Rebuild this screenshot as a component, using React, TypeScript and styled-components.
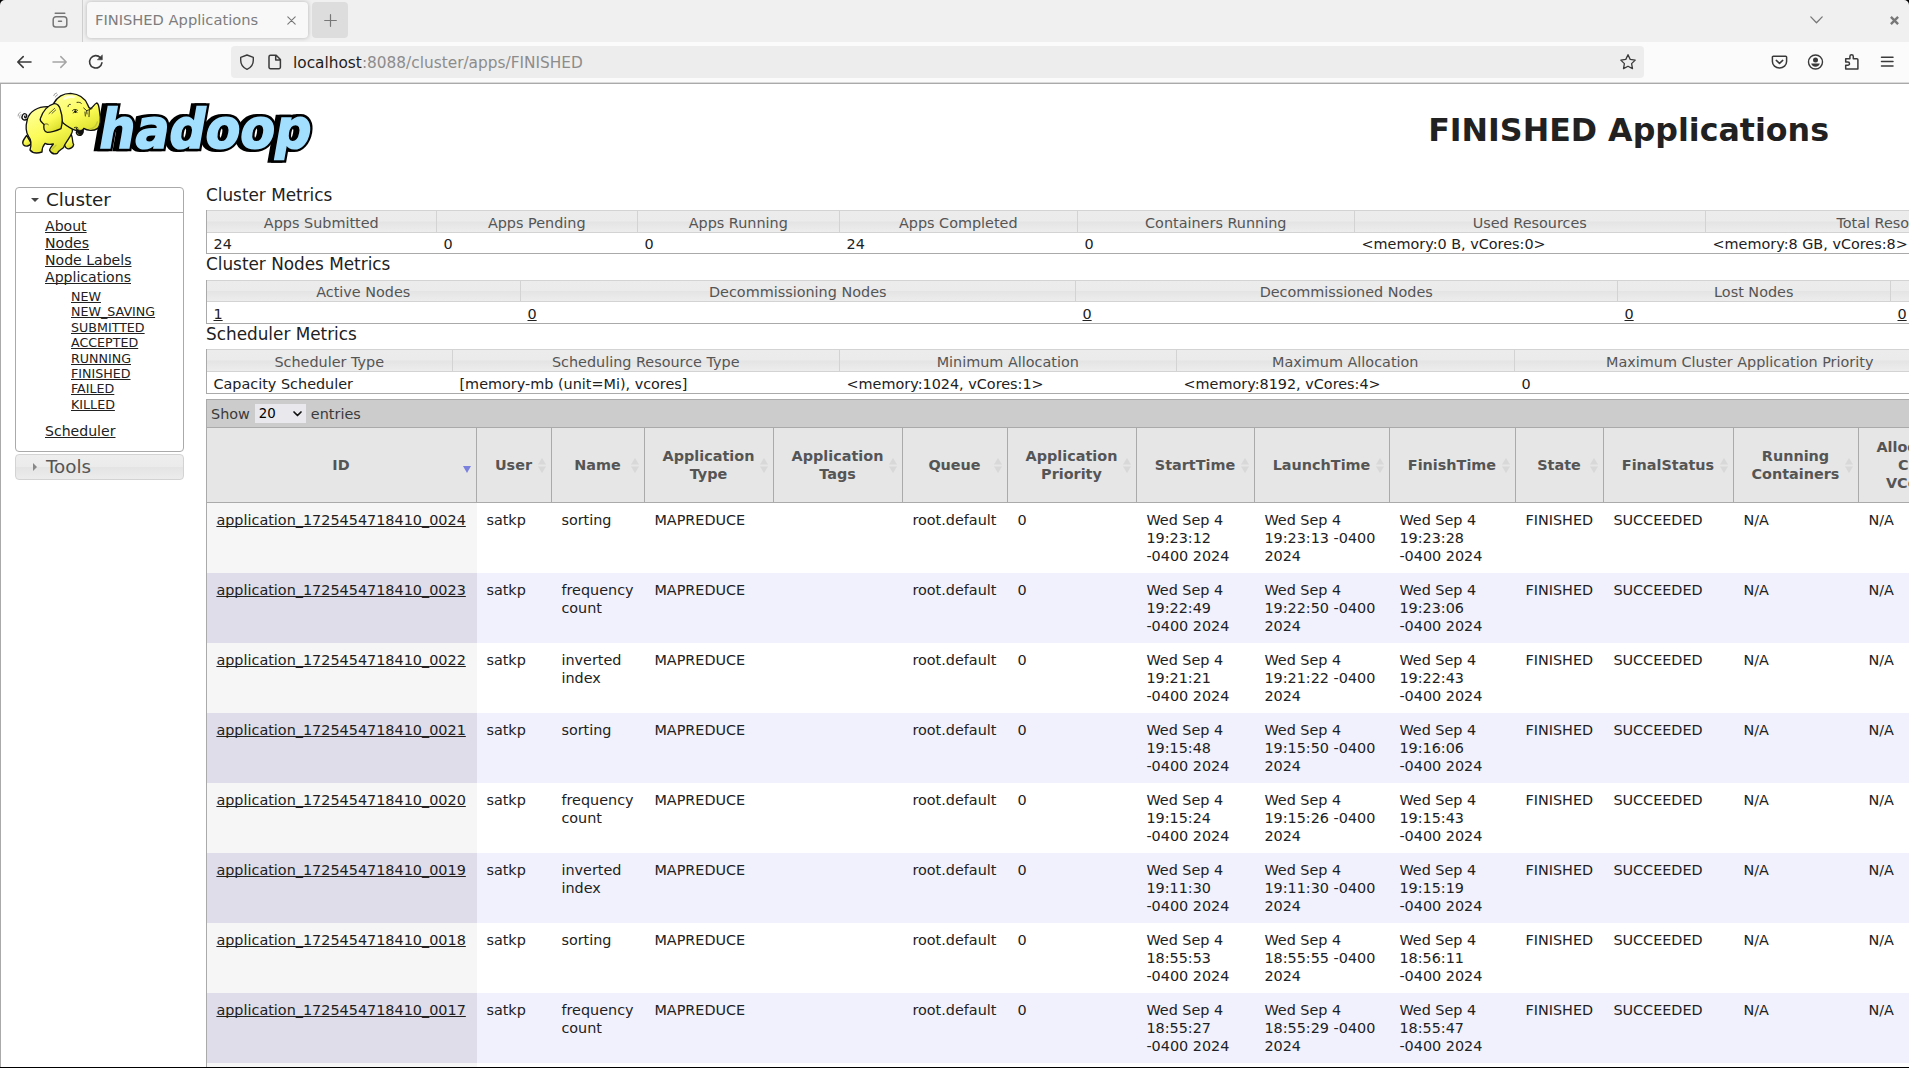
import React from "react";
import styled, { createGlobalStyle } from "styled-components";

const GlobalStyle = createGlobalStyle`
  * { box-sizing: border-box; }
  html, body { margin: 0; padding: 0; overflow: hidden; background: #fff; }
  body { font-family: "DejaVu Sans", sans-serif; color: #212121; }
`;

const Window = styled.div`
  width: 1909px;
  height: 1068px;
  overflow: hidden;
  display: flex;
  flex-direction: column;
  border-bottom: 1px solid #000;
  background: #000;
`;

/* ---------- browser chrome ---------- */

const TabStrip = styled.div`
  flex: none;
  height: 42px;
  display: flex;
  align-items: flex-start;
  background: #f0f0f0;
  border-radius: 5px 5px 0 0;
  color: #7d7d7d;
`;

const ViewButton = styled.div`
  width: 83px;
  height: 42px;
  padding: 12px 0 0 52px;
  border-right: 1px solid #cfcfcf;
`;

const Tab = styled.div`
  width: 221px;
  height: 36px;
  margin: 2px 4px 0 4px;
  padding: 0 12px 0 8px;
  display: flex;
  align-items: center;
  justify-content: space-between;
  border-radius: 4px;
  background: #f8f8f8;
  box-shadow: 0 0 4px rgba(0, 0, 0, 0.25);
  font-size: 14.67px;
  line-height: 36px;
  white-space: nowrap;
`;

const NewTab = styled.div`
  width: 36px;
  height: 36px;
  margin-top: 2px;
  display: flex;
  align-items: center;
  justify-content: center;
  border-radius: 4px;
  background: #dddddd;
`;

const WindowControls = styled.div`
  margin-left: auto;
  height: 40px;
  padding-right: 10px;
  display: flex;
  align-items: center;
  gap: 67px;
`;

const Toolbar = styled.div`
  flex: none;
  height: 41px;
  padding: 4px 15px 0 16px;
  display: flex;
  align-items: flex-start;
  background: #fbfbfb;
  border-bottom: 1px solid #dadada;
`;

const NavButtons = styled.div`
  width: 215px;
  height: 32px;
  display: flex;
  align-items: center;
  gap: 20px;
`;

const UrlBar = styled.div`
  width: 1413px;
  height: 32px;
  padding: 0 8px 0 8px;
  display: flex;
  align-items: center;
  border-radius: 4px;
  background: #ededed;
`;

const UrlText = styled.div`
  flex: 1;
  margin-left: 10px;
  font-size: 15.35px;
  line-height: 32px;
  padding-top: 1px;
  color: #8c8c8c;
  b { font-weight: normal; color: #1c1c1c; }
`;

const UrlIcons = styled.div`
  display: flex;
  gap: 12px;
`;

const ToolbarActions = styled.div`
  margin-left: auto;
  height: 32px;
  display: flex;
  align-items: center;
  gap: 20px;
`;

/* ---------- page ---------- */

const Page = styled.div`
  flex: 1;
  min-height: 0;
  overflow: hidden;
  background: #fff;
  border-top: 1px solid #aaa;
  border-left: 1px solid #aaa;
`;

const Header = styled.header`
  height: 101px;
  padding: 2px 80px 0 9px;
  display: flex;
  justify-content: space-between;
`;

const Title = styled.h1`
  margin: 25px 0 0;
  font-size: 31.68px;
  line-height: 38px;
  font-weight: bold;
`;

const Columns = styled.div`
  display: flex;
  align-items: flex-start;
`;

const Sidebar = styled.nav`
  flex: none;
  width: 205px;
  padding: 2px 22px 0 14px;
`;

const Panel = styled.section`
  height: 265px;
  margin-bottom: 2px;
  border: 1px solid #aaa;
  border-radius: 4px;
`;

const PanelHead = styled.div<{ $closed?: boolean }>`
  height: ${(p) => (p.$closed ? 26 : 25)}px;
  padding-left: ${(p) => (p.$closed ? 17 : 15)}px;
  padding-bottom: ${(p) => (p.$closed ? 0 : 1)}px;
  display: flex;
  align-items: center;
  font-size: 18.3px;
  line-height: 24px;
  color: ${(p) => (p.$closed ? "#555" : "#212121")};
  background: ${(p) => (p.$closed ? "linear-gradient(#eeeeee 0, #ebebeb 50%, #e4e4e4 52%, #ececec 100%)" : "transparent")};
  border: ${(p) => (p.$closed ? "1px solid #d3d3d3" : "0")};
  border-bottom: 1px solid ${(p) => (p.$closed ? "#d3d3d3" : "#aaa")};
  border-radius: ${(p) => (p.$closed ? "4px" : "0")};
  svg { margin-right: ${(p) => (p.$closed ? 9 : 7)}px; }
`;

const NavList = styled.ul`
  margin: 0;
  padding: 5px 0 0 29px;
  list-style: none;
  font-size: 14.08px;
  line-height: 17px;
`;

const SubList = styled.ul`
  margin: 3px 0 11px;
  padding: 0 0 0 26px;
  list-style: none;
  font-size: 12.67px;
  line-height: 15.4px;
`;

const Link = styled.a`
  color: inherit;
  text-decoration: underline;
  text-underline-offset: 1px;
  text-decoration-thickness: 1px;
  text-decoration-skip-ink: none;
`;

const Main = styled.main`
  flex: none;
  width: 2400px;
`;

const MetricTitle = styled.h2<{ $gap: number }>`
  margin: 0 0 ${(p) => p.$gap}px;
  font-size: 16.85px;
  line-height: 20px;
  font-weight: normal;
`;

const MetricTable = styled.div`
  border-left: 1px solid #aaa;
  border-bottom: 1px solid #aaa;
`;

const MetricRow = styled.div<{ $cols: string; $pad: number; $height: number; $head?: boolean }>`
  height: ${(p) => p.$height}px;
  display: grid;
  grid-template-columns: ${(p) => p.$cols};
  font-size: 14.4px;
  line-height: 18px;
  white-space: nowrap;
  color: ${(p) => (p.$head ? "#555" : "#212121")};
  text-align: ${(p) => (p.$head ? "center" : "left")};
  background: ${(p) => (p.$head ? "linear-gradient(#ececec 0, #ebebeb 49%, #e4e4e4 51%, #ededed 100%)" : "#fff")};
  border-top: ${(p) => (p.$head ? "1px solid #d3d3d3" : "0")};
  border-bottom: ${(p) => (p.$head ? "1px solid #d3d3d3" : "0")};
  > div { padding: ${(p) => p.$pad}px 7px 0 6.5px; }
  > div + div { border-left: 1px solid ${(p) => (p.$head ? "#d3d3d3" : "transparent")}; }
`;

const AppsPanel = styled.div`
  margin-top: 5px;
  border-top: 1px solid #aaa;
  border-left: 1px solid #aaa;
`;

const LengthBar = styled.div`
  height: 28px;
  padding-left: 4px;
  display: flex;
  align-items: center;
  gap: 5px;
  font-size: 14.4px;
  line-height: 18px;
  color: #3a3a3a;
  background: #ccc;
  border-bottom: 1px solid #aaa;
`;

const LengthSelect = styled.div`
  width: 51px;
  height: 19px;
  padding: 0 4px;
  display: flex;
  align-items: center;
  justify-content: space-between;
  font-size: 13.33px;
  color: #000;
  background: #e9e9ed;
`;

const AppsTable = styled.table`
  width: 2393px;
  table-layout: fixed;
  border-collapse: separate;
  border-spacing: 0;
  font-size: 14.4px;
  line-height: 18px;
`;

const HeadCell = styled.th`
  position: relative;
  height: 75px;
  padding: 3px 18px 3px 17px;
  font-weight: bold;
  color: #555;
  text-align: center;
  vertical-align: middle;
  background: #e6e6e6;
  border-right: 1px solid #aaa;
  border-bottom: 1px solid #aaa;
`;

const SortMark = styled.svg`
  position: absolute;
  right: 5px;
  top: 30px;
`;

const AppRow = styled.tr<{ $odd: boolean }>`
  height: 70px;
  background: ${(p) => (p.$odd ? "#f1f1fe" : "#fff")};
  td:first-child { background: ${(p) => (p.$odd ? "#dedde9" : "#f6f6f6")}; }
`;

const Cell = styled.td`
  padding: 8px 0 8px 9.4px;
  vertical-align: top;
  white-space: pre-line;
`;

/* ---------- icons ---------- */

type IconProps = { w?: number; h?: number; color?: string; sw?: number; children: React.ReactNode };

const IconSvg = styled.svg`
  flex: none;
  display: block;
  overflow: visible;
`;

const Icon = ({ w = 16, h = 16, color = "#3a3a3a", sw = 1.3, children }: IconProps) => (
  <IconSvg width={w} height={h} viewBox={`0 0 ${w} ${h}`} fill="none" stroke={color} strokeWidth={sw} strokeLinecap="round" strokeLinejoin="round">
    {children}
  </IconSvg>
);

const HadoopLogo = () => (
  <IconSvg width="310" height="80" viewBox="0 0 930 240">
    <defs>
      <linearGradient id="skin" x1="0.2" y1="0" x2="0.7" y2="1">
        <stop offset="0" stopColor="#ffff9a" />
        <stop offset="0.55" stopColor="#fbfb55" />
        <stop offset="1" stopColor="#d9dc28" />
      </linearGradient>
    </defs>
    <g fontFamily="DejaVu Sans" fontWeight="bold" fontSize="164" strokeLinejoin="miter" strokeMiterlimit="2" transform="translate(255 187) skewX(-10)">
      <text x="-6" y="0" fill="#000" stroke="#000" strokeWidth="20" textLength="636" lengthAdjust="spacingAndGlyphs">hadoop</text>
      <text x="5" y="0" fill="#000" stroke="#000" strokeWidth="20" textLength="636" lengthAdjust="spacingAndGlyphs">hadoop</text>
      <text x="5" y="-1" fill="#a2dfff" stroke="#a2dfff" strokeWidth="5" textLength="636" lengthAdjust="spacingAndGlyphs">hadoop</text>
    </g>
    <g fill="url(#skin)" stroke="#111" strokeWidth="4" strokeLinejoin="round" strokeLinecap="round">
      <path d="M54 98 C40 108 32 97 38 87 C43 79 54 85 49 93 C46 99 42 93 45 90" fill="none" />
      <path d="M50 148 C42 160 34 168 40 176 C48 184 58 180 64 172 Z" />
      <path d="M158 165 C166 178 164 186 172 188 C180 190 190 184 191 176 C186 170 190 160 184 146 Z" />
      <path d="M112 62 C84 62 58 76 52 100 C46 122 48 140 56 152 C66 164 64 178 60 192 C68 202 84 202 96 198 C96 188 100 178 105 172 C113 176 122 176 130 174 C124 182 118 188 119 193 C124 202 132 206 142 202 C146 192 156 190 161 184 C164 172 178 158 184 144 C194 130 180 90 160 66 Z" />
      <path d="M131 52 C142 32 160 22 182 22 C206 24 224 34 233 56 C235 62 238 66 241 68 C248 66 251 56 260 51 C266 52 266 58 268 72 C272 94 274 118 262 128 C250 136 232 134 221 127 C216 134 222 142 214 147 C204 150 196 144 200 134 C184 130 170 120 160 112 C150 92 134 76 131 52 Z" />
      <path d="M132 53 C114 58 98 76 91 98 C88 106 99 110 102 116 C100 126 102 138 112 139 C128 139 142 133 153 128 C158 110 158 92 152 75 C150 60 141 52 132 53 Z" />
      <path d="M199 127 C208 136 216 134 221 127 C218 136 224 142 213 146 C203 146 199 138 199 127 Z" fill="#111" strokeWidth="2" />
      <path d="M193 125 C197 123 201 123 204 126 M221 66 L230 74 L246 68 M230 74 L231 84 M238 72 L237 92 M225 78 L226 90" fill="none" strokeWidth="2.5" />
      <path d="M187 74 C190 69 199 69 203 73 M190 81 C194 74 198 74 201 79 M174 62 C174 57 178 54 181 55 M201 49 C208 48 212 50 214 52" fill="none" strokeWidth="2.5" />
      <ellipse cx="196" cy="77" rx="3.5" ry="4" fill="#111" stroke="none" />
      <path d="M134 67 L117 83 M137 72 L126 82 M103 115 C108 113 112 113 115 116" fill="none" strokeWidth="2" />
      <path d="M24 90 Q23 82 31 79 M29 96 Q27 88 33 85 M131 29 Q132 22 140 21 M136 33 Q137 28 143 26" fill="none" stroke="#777" strokeWidth="2" />
      <path d="M126 190 L138 178 M240 129 Q257 126 262 108" fill="none" stroke="#c3c83a" strokeWidth="4" />
      <path d="M162 38 Q176 30 191 33" fill="none" stroke="#ffffe0" strokeWidth="7" />
    </g>
  </IconSvg>
);

/* ---------- data ---------- */

const clusterMetrics = {
  cols: "229px 201px 202px 238px 277px 351px 374px 321px",
  head: ["Apps Submitted", "Apps Pending", "Apps Running", "Apps Completed", "Containers Running", "Used Resources", "Total Resources", ""],
  row: ["24", "0", "0", "24", "0", "<memory:0 B, vCores:0>", "<memory:8 GB, vCores:8>", ""],
};

const nodeMetrics = {
  cols: "313px 555px 542px 273px 710px",
  head: ["Active Nodes", "Decommissioning Nodes", "Decommissioned Nodes", "Lost Nodes", ""],
  row: ["1", "0", "0", "0", "0"],
};

const schedulerMetrics = {
  cols: "245px 387px 337px 338px 451px 635px",
  head: ["Scheduler Type", "Scheduling Resource Type", "Minimum Allocation", "Maximum Allocation", "Maximum Cluster Application Priority", ""],
  row: ["Capacity Scheduler", "[memory-mb (unit=Mi), vcores]", "<memory:1024, vCores:1>", "<memory:8192, vCores:4>", "0", ""],
};

const states = ["NEW", "NEW_SAVING", "SUBMITTED", "ACCEPTED", "RUNNING", "FINISHED", "FAILED", "KILLED"];

const columns: [string, number][] = [
  ["ID", 270], ["User", 75], ["Name", 93], ["Application Type", 129], ["Application Tags", 129],
  ["Queue", 105], ["Application Priority", 129], ["StartTime", 118], ["LaunchTime", 135],
  ["FinishTime", 126], ["State", 88], ["FinalStatus", 130], ["Running Containers", 125],
  ["Allocated CPU VCores", 113], ["", 628],
];

const apps: [string, string, string, string, string][] = [
  ["0024", "sorting", "19:23:12", "19:23:13", "19:23:28"],
  ["0023", "frequency count", "19:22:49", "19:22:50", "19:23:06"],
  ["0022", "inverted index", "19:21:21", "19:21:22", "19:22:43"],
  ["0021", "sorting", "19:15:48", "19:15:50", "19:16:06"],
  ["0020", "frequency count", "19:15:24", "19:15:26", "19:15:43"],
  ["0019", "inverted index", "19:11:30", "19:11:30", "19:15:19"],
  ["0018", "sorting", "18:55:53", "18:55:55", "18:56:11"],
  ["0017", "frequency count", "18:55:27", "18:55:29", "18:55:47"],
];

type MetricsProps = {
  title: string;
  gap: number;
  data: { cols: string; head: string[]; row: string[] };
  headPad: number;
  headHeight: number;
  rowPad: number;
  rowHeight: number;
  links?: boolean;
};

const Metrics = ({ title, gap, data, headPad, headHeight, rowPad, rowHeight, links }: MetricsProps) => (
  <section>
    <MetricTitle $gap={gap}>{title}</MetricTitle>
    <MetricTable>
      <MetricRow $head $cols={data.cols} $pad={headPad} $height={headHeight}>
        {data.head.map((h, i) => <div key={i}>{h}</div>)}
      </MetricRow>
      <MetricRow $cols={data.cols} $pad={rowPad} $height={rowHeight}>
        {data.row.map((v, i) => <div key={i}>{links ? <Link>{v}</Link> : v}</div>)}
      </MetricRow>
    </MetricTable>
  </section>
);

export default function App() {
  return (
    <>
      <GlobalStyle />
      <Window>
        <TabStrip>
          <ViewButton>
            <Icon color="#757575" sw={1.5}>
              <path d="M3.2 1.2h9.6M4 4.7h8a2.8 2.8 0 0 1 2.8 2.8v5a2.5 2.5 0 0 1-2.5 2.5H3.7a2.5 2.5 0 0 1-2.5-2.5v-5A2.8 2.8 0 0 1 4 4.7zM6.5 9.3h3" />
            </Icon>
          </ViewButton>
          <Tab>
            FINISHED Applications
            <Icon w={9} h={9} color="#777" sw={1.1}><path d="M.8.8l7.4 7.4M8.2.8L.8 8.2" /></Icon>
          </Tab>
          <NewTab>
            <Icon w={13} h={13} color="#777" sw={1.2}><path d="M6.5.7v11.6M.7 6.5h11.6" /></Icon>
          </NewTab>
          <WindowControls>
            <Icon w={13} h={8} color="#777" sw={1.3}><path d="M.8.9l5.7 5.8L12.2.9" /></Icon>
            <Icon w={9} h={9} color="#777" sw={2.4}><path d="M.9.9l7.2 7.2M8.1.9L.9 8.1" strokeLinecap="butt" /></Icon>
          </WindowControls>
        </TabStrip>
        <Toolbar>
          <NavButtons>
            <Icon sw={1.6}><path d="M15 8H2M7.2 2.6L1.8 8l5.4 5.4" /></Icon>
            <Icon sw={1.5} color="#a5a5a5"><path d="M1 8h13M8.8 2.6L14.2 8l-5.4 5.4" /></Icon>
            <Icon sw={1.6}>
              <path d="M13.9 8.8A6.2 6.2 0 1 1 12.3 3.6" />
              <path d="M14.3 1.2v4.6H9.7z" fill="#3a3a3a" strokeWidth=".6" />
            </Icon>
          </NavButtons>
          <UrlBar>
            <UrlIcons>
              <Icon sw={1.4}><path d="M8 1L1.7 3.4v2.8C1.7 10.4 4 13.6 8 15.3c4-1.7 6.3-4.9 6.3-9.1V3.4z" /></Icon>
              <Icon sw={1.5}><path d="M3.5 1.3h5.7l4.2 4.2v7.7a1.5 1.5 0 0 1-1.5 1.5H3.5A1.5 1.5 0 0 1 2 13.2V2.8a1.5 1.5 0 0 1 1.5-1.5zM8.7 1.5V6h4.5" /></Icon>
            </UrlIcons>
            <UrlText><b>localhost</b>:8088/cluster/apps/FINISHED</UrlText>
            <Icon sw={1.3}><path d="M8 .7l2.2 4.7 5 .7-3.6 3.5.9 5L8 12.200l-4.500 2.400.9-5L.8 6.100l5-.7z" /></Icon>
          </UrlBar>
          <ToolbarActions>
            <Icon sw={1.5}><path d="M1.300 2.200h12.400a.9.900 0 0 1 .9.900V7.500a7.100 6.600 0 0 1-14.200 0V3.100a.9.900 0 0 1 .9-.9zM4.300 6.400L7.500 9.400l3.200-3" /></Icon>
            <Icon sw={1.4}>
              <circle cx="7.500" cy="8" r="7" />
              <circle cx="7.500" cy="5.900" r="2.500" fill="#3a3a3a" stroke="none" />
              <path d="M3.200 9.600h8.600c-.4 2-2 3.200-4.300 3.200s-3.900-1.200-4.300-3.200z" fill="#3a3a3a" stroke="none" />
            </Icon>
            <Icon sw={1.5}><path d="M1.700 4.800h4.200V2.500a1.700 1.700 0 0 1 3.400 0v2.300h3.600a1 1 0 0 1 1 1v9.100H1.700v-3.600h2.200a1.600 1.600 0 0 0 0-3.200H1.700z" /></Icon>
            <Icon w={14} sw={1.5}><path d="M1.500 3.300h11.500M1.500 7.500h11.500M1.500 12h11.500" /></Icon>
          </ToolbarActions>
        </Toolbar>
        <Page>
          <Header>
            <HadoopLogo />
            <Title>FINISHED Applications</Title>
          </Header>
          <Columns>
            <Sidebar>
              <Panel>
                <PanelHead>
                  <svg width="8" height="4" viewBox="0 0 8 4"><path d="M0 0h8L4 4z" fill="#454545" /></svg>
                  Cluster
                </PanelHead>
                <NavList>
                  <li><Link>About</Link></li>
                  <li><Link>Nodes</Link></li>
                  <li><Link>Node Labels</Link></li>
                  <li>
                    <Link>Applications</Link>
                    <SubList>
                      {states.map((s) => <li key={s}><Link>{s}</Link></li>)}
                    </SubList>
                  </li>
                  <li><Link>Scheduler</Link></li>
                </NavList>
              </Panel>
              <PanelHead $closed>
                <svg width="4" height="8" viewBox="0 0 4 8"><path d="M0 0v8L4 4z" fill="#888" /></svg>
                Tools
              </PanelHead>
            </Sidebar>
            <Main>
              <Metrics title="Cluster Metrics" gap={5} data={clusterMetrics} headPad={3} headHeight={23} rowPad={2} rowHeight={20} />
              <Metrics title="Cluster Nodes Metrics" gap={6} data={nodeMetrics} headPad={2} headHeight={22} rowPad={3} rowHeight={21} links />
              <Metrics title="Scheduler Metrics" gap={5} data={schedulerMetrics} headPad={3} headHeight={23} rowPad={3} rowHeight={21} />
              <AppsPanel>
                <LengthBar>
                  Show
                  <LengthSelect>
                    20
                    <Icon w={9} h={6} color="#111" sw={1.7}><path d="M1 1l3.5 3.5L8 1" /></Icon>
                  </LengthSelect>
                  entries
                </LengthBar>
                <AppsTable>
                  <colgroup>
                    {columns.map(([name, w]) => <col key={name} style={{ width: w }} />)}
                  </colgroup>
                  <thead>
                    <tr>
                      {columns.map(([name]) => (
                        <HeadCell key={name}>
                          {name}
                          <SortMark width="8" height="15" viewBox="0 0 8 15">
                            {name === "ID" ? (
                              <path d="M0 8h8L4 15z" fill="#7a80dd" />
                            ) : (
                              <path d="M0 6.5h8L4 0zM0 8.5h8L4 15z" fill="#d8d8d8" />
                            )}
                          </SortMark>
                        </HeadCell>
                      ))}
                    </tr>
                  </thead>
                  <tbody>
                    {apps.map(([id, name, start, launch, finish], i) => (
                      <AppRow key={id} $odd={i % 2 === 1}>
                        <Cell><Link>application_1725454718410_{id}</Link></Cell>
                        <Cell>satkp</Cell>
                        <Cell>{name.replace(" ", "\n")}</Cell>
                        <Cell>MAPREDUCE</Cell>
                        <Cell />
                        <Cell>root.default</Cell>
                        <Cell>0</Cell>
                        <Cell>{`Wed Sep 4\n${start}\n-0400 2024`}</Cell>
                        <Cell>{`Wed Sep 4\n${launch} -0400\n2024`}</Cell>
                        <Cell>{`Wed Sep 4\n${finish}\n-0400 2024`}</Cell>
                        <Cell>FINISHED</Cell>
                        <Cell>SUCCEEDED</Cell>
                        <Cell>N/A</Cell>
                        <Cell>N/A</Cell>
                        <Cell />
                      </AppRow>
                    ))}
                    <AppRow $odd={false}>
                      {columns.map(([name]) => <Cell key={name} />)}
                    </AppRow>
                  </tbody>
                </AppsTable>
              </AppsPanel>
            </Main>
          </Columns>
        </Page>
      </Window>
    </>
  );
}
